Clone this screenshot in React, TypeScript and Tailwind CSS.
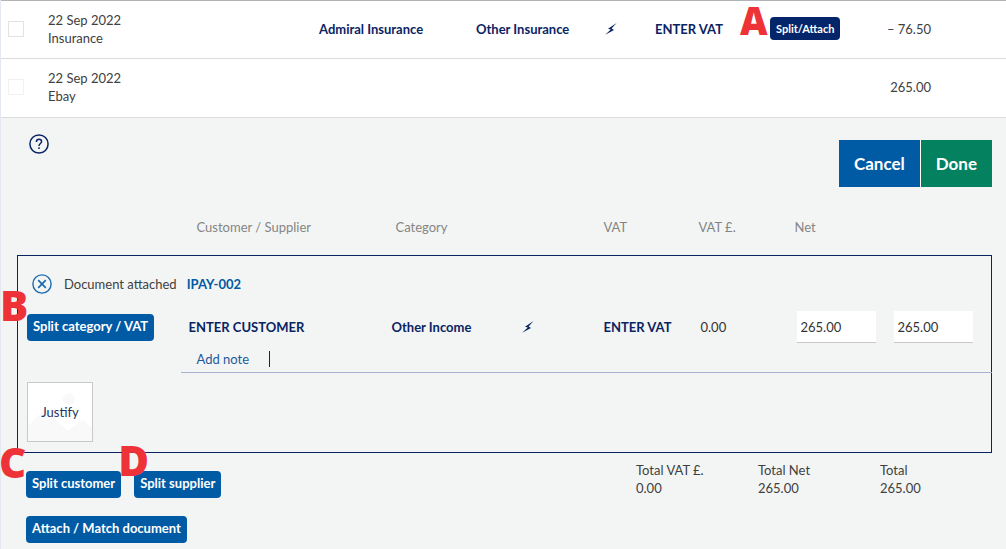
import type { ReactNode } from "react";

const transactions = [
  {
    id: "insurance",
    date: "22 Sep 2022",
    description: "Insurance",
    supplier: "Admiral Insurance",
    category: "Other Insurance",
    vat: "ENTER VAT",
    amount: "– 76.50",
    box: "border-[#e3e3e3]",
  },
  {
    id: "ebay",
    date: "22 Sep 2022",
    description: "Ebay",
    amount: "265.00",
    box: "border-[#f2f2f2]",
  },
];

const totals = [
  { label: "Total VAT £.", value: "0.00" },
  { label: "Total Net", value: "265.00" },
  { label: "Total", value: "265.00" },
];

function BoltIcon() {
  return (
    <svg width="12" height="12" viewBox="0 0 12 12" fill="#0a2463" aria-hidden="true">
      <path d="M11.6 0 3 5.8l2.8.8L.2 11.8 9 6.9 6.6 5.6z" />
    </svg>
  );
}

function HelpIcon() {
  return (
    <svg width="20" height="20" viewBox="0 0 20 20" fill="none" stroke="#0a2463" strokeWidth="1.5" aria-hidden="true">
      <circle cx="10" cy="10" r="9.1" />
      <path d="M7.4 7.9c0-1.6 1.1-2.6 2.6-2.6s2.6 1 2.6 2.3c0 2-2.6 1.9-2.6 4.3" />
      <path d="M10 13.3v1.6" />
    </svg>
  );
}

function RemoveIcon() {
  return (
    <svg width="20" height="20" viewBox="0 0 20 20" fill="none" stroke="#1c6aae" strokeWidth="1.4" aria-hidden="true">
      <circle cx="10" cy="10" r="9.1" />
      <path d="m6.2 6.2 7.6 7.6m0-7.6-7.6 7.6" strokeWidth="1.7" />
    </svg>
  );
}

function PlaceholderImage() {
  return (
    <svg className="absolute inset-0 h-full w-full" viewBox="0 0 64 58" fill="#f9f9f9" aria-hidden="true">
      <circle cx="41" cy="16" r="6" />
      <path d="M0 43 16 27l24 21 14-11 10 8v13H0z" />
    </svg>
  );
}

function Marker({ className, children }: { className: string; children: ReactNode }) {
  return (
    <span
      className={`absolute z-10 font-['Open_Sans','Noto_Sans',sans-serif] leading-none font-extrabold text-[#ee3338] ${className}`}
    >
      {children}
    </span>
  );
}

function ActionButton({ children }: { children: ReactNode }) {
  return (
    <button className="h-[27px] rounded bg-[#005aa4] px-1.5 pb-0.5 font-bold whitespace-nowrap text-white">
      {children}
    </button>
  );
}

function TransactionsTable() {
  return (
    <table className="w-full table-fixed border-t border-[#b3b3b3] bg-white">
      <colgroup>
        <col className="w-[47px]" />
        <col />
        <col className="w-[157px]" />
        <col className="w-[129px]" />
        <col className="w-[50px]" />
        <col className="w-[115px]" />
        <col className="w-[80px]" />
        <col className="w-[156px]" />
      </colgroup>
      <tbody>
        {transactions.map((item) => (
          <tr key={item.id} className="h-[59px] border-b border-[#dcdcdc] first:h-[58px] [&>td]:pb-0.5">
            <td className="pl-[7px]">
              <input
                type="checkbox"
                aria-label={`Select ${item.description}`}
                className={`block size-4 appearance-none border bg-white ${item.box}`}
              />
            </td>
            <td>
              {item.date}
              <br />
              {item.description}
            </td>
            <td className="font-bold text-[#0a2463]">{item.supplier}</td>
            <td className="font-bold text-[#0a2463]">{item.category}</td>
            <td>{item.category && <BoltIcon />}</td>
            <td className="font-bold text-[#0a2463]">{item.vat}</td>
            <td>
              {item.vat && (
                <div className="relative flex">
                  <button className="h-[23px] rounded bg-[#04256a] px-1.5 text-[11px] font-bold text-white">
                    Split/Attach
                  </button>
                  <Marker className="-top-4 -left-[30px] text-[38px]">A</Marker>
                </div>
              )}
            </td>
            <td className="pr-[75px] text-right">{item.amount}</td>
          </tr>
        ))}
      </tbody>
    </table>
  );
}

function SplitTable() {
  return (
    <table className="w-full table-fixed border-collapse">
      <colgroup>
        <col className="w-[163px]" />
        <col />
        <col className="w-[130px]" />
        <col className="w-[82px]" />
        <col className="w-[97px]" />
        <col className="w-[96px]" />
        <col className="w-[97px]" />
        <col className="w-[106px]" />
      </colgroup>
      <thead>
        <tr className="h-[68px] text-left text-[#858585] [&>th]:pt-3 [&>th]:font-normal">
          <th></th>
          <th className="pl-4">Customer / Supplier</th>
          <th className="pl-3">Category</th>
          <th></th>
          <th className="pl-2">VAT</th>
          <th className="pl-1.5">VAT £.</th>
          <th className="pl-1.5">Net</th>
          <th></th>
        </tr>
      </thead>
      <tbody className="border border-[#0a2463]">
        <tr className="h-[52px]">
          <td colSpan={8} className="pt-1.5 pl-3.5">
            <div className="flex items-center">
              <button aria-label="Remove document">
                <RemoveIcon />
              </button>
              <span className="ml-3">Document attached</span>
              <a href="#document" className="ml-2.5 font-bold text-[#005aa4]">
                IPAY-002
              </a>
            </div>
          </td>
        </tr>
        <tr className="h-10 text-[#333]">
          <td className="pl-[9px]">
            <div className="relative flex">
              <ActionButton>Split category / VAT</ActionButton>
              <Marker className="-top-[30px] -left-[27px] text-[42px]">B</Marker>
            </div>
          </td>
          <td className="pl-2 font-bold text-[#0a2463]">ENTER CUSTOMER</td>
          <td className="pl-2 font-bold text-[#0a2463]">Other Income</td>
          <td className="pl-2">
            <BoltIcon />
          </td>
          <td className="pl-2 font-bold text-[#0a2463]">ENTER VAT</td>
          <td className="pl-2">0.00</td>
          <td className="pl-2">
            <input
              aria-label="Net"
              defaultValue="265.00"
              className="block h-8 w-[79px] border-b border-[#c8c8c8] bg-white px-1"
            />
          </td>
          <td className="pl-2">
            <input
              aria-label="Total"
              defaultValue="265.00"
              className="block h-8 w-[79px] border-b border-[#c8c8c8] bg-white px-1"
            />
          </td>
        </tr>
        <tr className="h-[25px]">
          <td></td>
          <td colSpan={7} className="border-b border-b-[#a5b3d0]">
            <div className="flex items-center pl-4">
              <label htmlFor="note" className="text-[#1c5a9c]">
                Add note
              </label>
              <input id="note" className="ml-5 h-4 flex-1 border-l border-[#0a2463] pl-2 outline-none" />
            </div>
          </td>
        </tr>
        <tr className="h-20">
          <td colSpan={8} className="pl-[9px]">
            <button className="relative block h-[60px] w-[66px] border border-[#c8c8c8] bg-white text-[#1f3460]">
              <PlaceholderImage />
              <span className="relative">Justify</span>
            </button>
          </td>
        </tr>
      </tbody>
    </table>
  );
}

export default function App() {
  return (
    <main className="min-h-screen border-l border-[#e3e8f4] bg-[#f3f5f4] font-[Lato,sans-serif] text-[13px] leading-[18px] text-[#404040]">
      <TransactionsTable />
      <section className="pr-[14px] pl-4">
        <div className="flex items-start justify-between pt-[22px]">
          <button aria-label="Help" className="-mt-1.5 ml-3">
            <HelpIcon />
          </button>
          <div className="flex gap-px bg-white text-[17px] font-bold text-white">
            <button className="h-[47px] bg-[#005aa4] px-[15px]">Cancel</button>
            <button className="h-[47px] bg-[#04825f] px-[15px]">Done</button>
          </div>
        </div>
        <SplitTable />
        <div className="flex justify-between pt-2 pl-[9px]">
          <div className="flex flex-col gap-[18px] pt-[10px]">
            <div className="flex gap-[13px]">
              <div className="relative flex">
                <ActionButton>Split customer</ActionButton>
                <Marker className="-top-[30px] -left-[27px] text-[42px]">C</Marker>
              </div>
              <div className="relative flex">
                <ActionButton>Split supplier</ActionButton>
                <Marker className="-top-8 -left-4 text-[42px]">D</Marker>
              </div>
            </div>
            <div className="flex">
              <ActionButton>Attach / Match document</ActionButton>
            </div>
          </div>
          <dl className="flex">
            {totals.map((total) => (
              <div key={total.label} className="w-[122px] last:w-[112px]">
                <dt>{total.label}</dt>
                <dd>{total.value}</dd>
              </div>
            ))}
          </dl>
        </div>
      </section>
    </main>
  );
}
